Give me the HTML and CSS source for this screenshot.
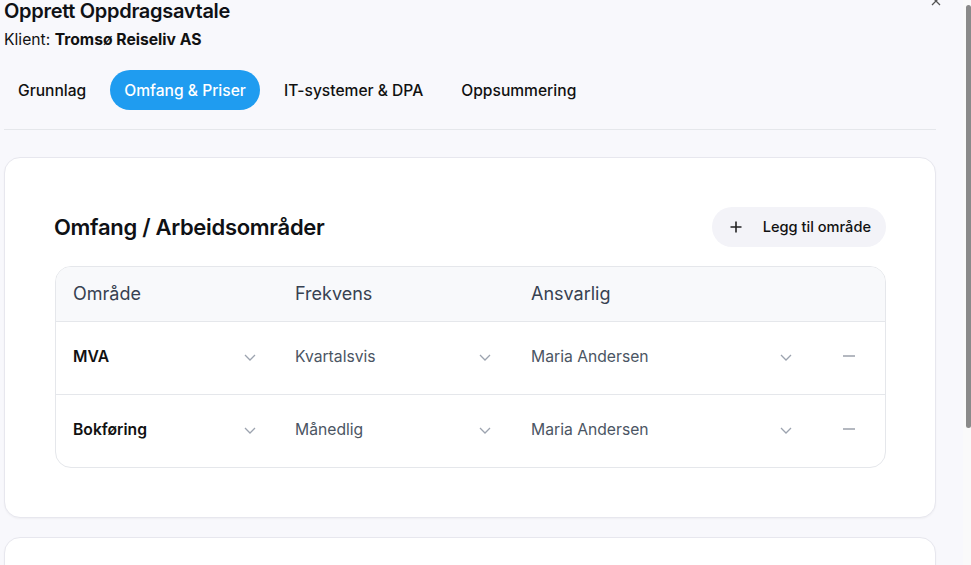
FILE: index.html
```html
<!DOCTYPE html>
<html lang="no">
<head>
<meta charset="utf-8">
<title>Opprett Oppdragsavtale</title>
<link rel="stylesheet" href="styles.css">
</head>
<body>
<div class="dialog">
  <button class="close" aria-label="Lukk">
    <svg width="10" height="10" viewBox="0 0 10 10"><path d="M1 1L9 9M9 1L1 9" stroke="#555" stroke-width="1.3" fill="none"/></svg>
  </button>
  <header class="head">
    <h1 class="title">Opprett Oppdragsavtale</h1>
    <p class="client">Klient: <strong>Tromsø Reiseliv AS</strong></p>
  </header>
  <nav class="tabs">
    <span class="tab">Grunnlag</span>
    <span class="tab active">Omfang &amp; Priser</span>
    <span class="tab">IT-systemer &amp; DPA</span>
    <span class="tab">Oppsummering</span>
  </nav>
  <section class="card">
    <div class="card-head">
      <h2 class="card-title">Omfang / Arbeidsområder</h2>
      <button class="add-btn">
        <svg width="12" height="12" viewBox="0 0 12 12"><path d="M6 0.5V11.5M0.5 6H11.5" stroke="#222" stroke-width="1.6" fill="none"/></svg>
        <span>Legg til område</span>
      </button>
    </div>
    <div class="table">
      <div class="row header">
        <div class="cell c1">Område</div>
        <div class="cell c2">Frekvens</div>
        <div class="cell c3">Ansvarlig</div>
        <div class="cell c4"></div>
      </div>
      <div class="row">
        <div class="cell c1 sel strong"><span>MVA</span><svg class="chev" width="12" height="7" viewBox="0 0 12 7"><path d="M1 1L6 6L11 1" stroke="#9ca3af" stroke-width="1.3" fill="none"/></svg></div>
        <div class="cell c2 sel"><span>Kvartalsvis</span><svg class="chev" width="12" height="7" viewBox="0 0 12 7"><path d="M1 1L6 6L11 1" stroke="#9ca3af" stroke-width="1.3" fill="none"/></svg></div>
        <div class="cell c3 sel"><span>Maria Andersen</span><svg class="chev" width="12" height="7" viewBox="0 0 12 7"><path d="M1 1L6 6L11 1" stroke="#9ca3af" stroke-width="1.3" fill="none"/></svg></div>
        <div class="cell c4"><span class="minus"></span></div>
      </div>
      <div class="row">
        <div class="cell c1 sel strong"><span>Bokføring</span><svg class="chev" width="12" height="7" viewBox="0 0 12 7"><path d="M1 1L6 6L11 1" stroke="#9ca3af" stroke-width="1.3" fill="none"/></svg></div>
        <div class="cell c2 sel"><span>Månedlig</span><svg class="chev" width="12" height="7" viewBox="0 0 12 7"><path d="M1 1L6 6L11 1" stroke="#9ca3af" stroke-width="1.3" fill="none"/></svg></div>
        <div class="cell c3 sel"><span>Maria Andersen</span><svg class="chev" width="12" height="7" viewBox="0 0 12 7"><path d="M1 1L6 6L11 1" stroke="#9ca3af" stroke-width="1.3" fill="none"/></svg></div>
        <div class="cell c4"><span class="minus"></span></div>
      </div>
    </div>
  </section>
  <section class="card second"></section>
</div>
<div class="scrollbar"><div class="thumb"></div></div>
</body>
</html>
```
FILE: styles.css
```css
* { box-sizing: border-box; }
html, body { margin: 0; padding: 0; }
body {
  background: #f8f8fc;
  font-family: Inter, "Noto Sans", sans-serif;
  color: #111827;
  height: 565px;
  overflow: hidden;
}
.dialog {
  position: relative;
  width: 932px;
  margin-left: 4px;
  margin-top: -3px;
}
.close {
  position: absolute;
  right: -6px;
  top: -2px;
  border: 0;
  background: none;
  padding: 0;
  width: 12px;
  height: 12px;
  display: flex;
  align-items: center;
  justify-content: center;
}
.head { display: flex; flex-direction: column; }
.title {
  margin: 0;
  font-size: 20px;
  line-height: 28px;
  font-weight: 600;
  letter-spacing: -0.3px;
  color: #0f1115;
}
.client {
  margin: 4px 0 0;
  font-size: 15.7px;
  line-height: 22px;
  color: #111;
}
.client strong { font-weight: 700; }
.tabs {
  display: flex;
  gap: 10px;
  margin-top: 19px;
  padding-bottom: 19px;
  border-bottom: 1px solid #e5e7eb;
}
.tab {
  height: 40px;
  padding: 0 14px;
  border-radius: 20px;
  display: flex;
  align-items: center;
  font-size: 15.6px;
  font-weight: 500;
  color: #111;
}
.tab.active {
  background: #1f9cf0;
  color: #fff;
}
.card {
  margin-top: 27px;
  background: #fff;
  border: 1px solid #e7e7ee;
  border-radius: 16px;
  box-shadow: 0 1px 2px rgba(0,0,0,0.04);
  padding: 49px 49px 49px 50px;
}
.card.second {
  margin-top: 19px;
  height: 120px;
}
.card-head {
  display: flex;
  align-items: center;
  justify-content: space-between;
  margin-bottom: 19px;
}
.card-title {
  margin: 0 0 0 -1px;
  font-size: 22px;
  font-weight: 600;
  letter-spacing: -0.3px;
  color: #0f1115;
}
.add-btn {
  display: flex;
  align-items: center;
  gap: 21px;
  height: 40px;
  padding: 0 15px 0 18px;
  border: 0;
  border-radius: 20px;
  background: #f3f3f8;
  font-family: inherit;
  font-size: 14.6px;
  font-weight: 500;
  color: #111;
}
.table {
  border: 1px solid #e5e7eb;
  border-radius: 16px;
  overflow: hidden;
}
.row {
  display: grid;
  grid-template-columns: 222px 236px 294px 1fr;
  height: 73px;
  padding-bottom: 4px;
  border-top: 1px solid #e5e7eb;
  align-items: center;
}
.row.header {
  height: 54px;
  padding-bottom: 2px;
  border-top: 0;
  background: #f8f9fb;
  font-size: 18px;
  color: #374151;
}
.cell {
  padding-left: 17px;
  display: flex;
  align-items: center;
}
.sel {
  justify-content: space-between;
  padding-right: 22px;
  font-size: 15.7px;
  color: #4b5563;
}
.sel.strong { color: #111; font-weight: 600; }
.row .c2.sel { padding-right: 23px; }
.row .c3.sel { padding-right: 16px; }
.chev { flex: none; margin-top: 2px; }
.c4 { justify-content: flex-start; padding-left: 35px; }
.minus {
  display: block;
  width: 12px;
  height: 1.5px;
  background: #b4b8c0;
}
.scrollbar {
  position: fixed;
  top: 0;
  right: 0;
  width: 8px;
  height: 565px;
  background: #fafafa;
}
.thumb {
  margin: 5px 0 0 3px;
  width: 5px;
  height: 423px;
  border-radius: 3px;
  background: #8a8a8a;
}
```
